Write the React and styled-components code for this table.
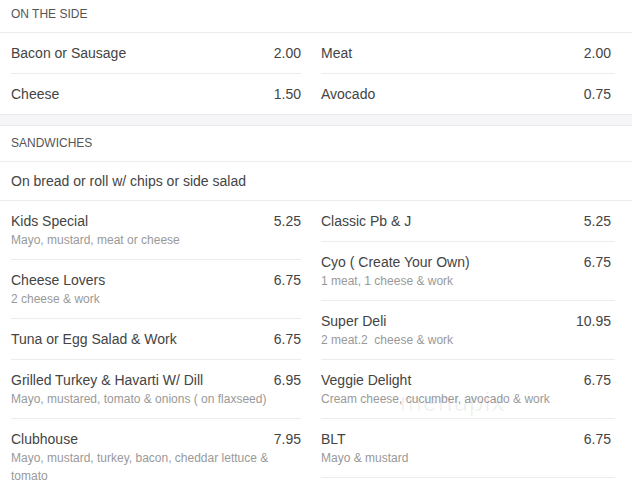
import React from 'react'
import styled, { createGlobalStyle } from 'styled-components'

const Global = createGlobalStyle`
    body {
        margin: 0;
        background: #fff;
        font-family: "Liberation Sans", Arial, sans-serif;
    }
`

const Page = styled.div`
    position: relative;
    margin-top: -3px;
    color: #444;
`

const SectionHeader = styled.div`
    padding: 10px 11px;
    line-height: 15px;
    font-size: 12px;
    text-transform: uppercase;
    color: #555;
    border-bottom: 1px solid #ececf0;
`

const SectionNote = styled.div`
    padding: 0 11px;
    height: 38px;
    line-height: 38px;
    font-size: 14px;
    color: #444;
    border-bottom: 1px solid #ececf0;
`

const Band = styled.div`
    height: 10px;
    background: #f5f5f8;
    border-top: 1px solid #e9e9ef;
    border-bottom: 1px solid #e9e9ef;
`

const Grid = styled.div`
    display: grid;
    grid-template-columns: 290px 294px;
    column-gap: 20px;
    padding: 0 17px 0 11px;
`

const Column = styled.div`
    display: flex;
    flex-direction: column;
`

const Item = styled.div`
    padding: 10px 0 10px;
    border-bottom: ${p => (p.$last ? 'none' : '1px solid #ececf0')};
`

const ItemRow = styled.div`
    display: flex;
    justify-content: space-between;
    font-size: 14px;
    line-height: 20px;
    color: #444;
`

const Price = styled.span`
    padding-right: ${p => (p.$right ? '4px' : '0')};
`

const Desc = styled.div`
    font-size: 12px;
    line-height: 18px;
    color: #999;
    padding-right: 20px;
    white-space: pre-wrap;
`

const Watermark = styled.div`
    position: absolute;
    left: 400px;
    top: 390px;
    font-size: 26px;
    letter-spacing: 1px;
    color: rgba(0, 0, 0, 0.06);
    pointer-events: none;
`

const side = [
    [
        { name: 'Bacon or Sausage', price: '2.00' },
        { name: 'Cheese', price: '1.50' },
    ],
    [
        { name: 'Meat', price: '2.00' },
        { name: 'Avocado', price: '0.75' },
    ],
]

const sandwiches = [
    [
        { name: 'Kids Special', price: '5.25', desc: 'Mayo, mustard, meat or cheese' },
        { name: 'Cheese Lovers', price: '6.75', desc: '2 cheese & work' },
        { name: 'Tuna or Egg Salad & Work', price: '6.75' },
        { name: 'Grilled Turkey & Havarti W/ Dill', price: '6.95', desc: 'Mayo, mustared, tomato & onions ( on flaxseed)' },
        { name: 'Clubhouse', price: '7.95', desc: 'Mayo, mustard, turkey, bacon, cheddar lettuce & tomato' },
    ],
    [
        { name: 'Classic Pb & J', price: '5.25' },
        { name: 'Cyo ( Create Your Own)', price: '6.75', desc: '1 meat, 1 cheese & work' },
        { name: 'Super Deli', price: '10.95', desc: '2 meat.2  cheese & work' },
        { name: 'Veggie Delight', price: '6.75', desc: 'Cream cheese, cucumber, avocado & work' },
        { name: 'BLT', price: '6.75', desc: 'Mayo & mustard' },
    ],
]

const MenuColumns = ({ columns, lastNoBorder }) => (
    <Grid>
        {columns.map((col, ci) => (
            <Column key={ci}>
                {col.map((item, key) => (
                    <Item key={key} $last={lastNoBorder && key === col.length - 1}>
                        <ItemRow>
                            <span>{item.name}</span>
                            <Price $right={ci === 1}>{item.price}</Price>
                        </ItemRow>
                        {item.desc && <Desc>{item.desc}</Desc>}
                    </Item>
                ))}
            </Column>
        ))}
    </Grid>
)

export default function App() {
    return (
        <Page>
            <Global />
            <SectionHeader>On the side</SectionHeader>
            <MenuColumns columns={side} lastNoBorder />
            <Band />
            <SectionHeader>Sandwiches</SectionHeader>
            <SectionNote>On bread or roll w/ chips or side salad</SectionNote>
            <MenuColumns columns={sandwiches} />
            <Watermark>menupix</Watermark>
        </Page>
    )
}
